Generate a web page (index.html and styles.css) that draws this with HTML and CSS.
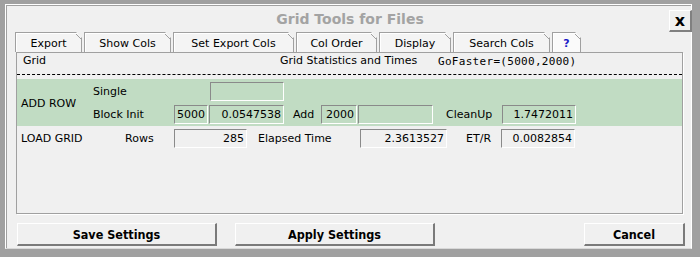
FILE: index.html
```html
<html>
   <head>
      <link rel="stylesheet" href="styles.css">
   </head>
   <body>
      <div class="frame">
         <div class="titleBar">
            <span></span>
            <span class="title">Grid Tools for Files</span>
            <button class="closeButton" type="button">x</button>
         </div>
         <div class="tabs">
            <div class="tab" style="width: 67px">Export</div>
            <div class="tab" style="width: 87px">Show Cols</div>
            <div class="tab" style="width: 121px">Set Export Cols</div>
            <div class="tab" style="width: 81px">Col Order</div>
            <div class="tab" style="width: 72px">Display</div>
            <div class="tab" style="width: 97px">Search Cols</div>
            <div class="tab tabHelp" style="width: 29px">?</div>
         </div>
         <div class="panel">
            <div class="panelHead">
               <span class="headGrid">Grid</span>
               <span class="headStats">Grid Statistics and Times</span>
               <span class="headMono">GoFaster=(5000,2000)</span>
            </div>
            <div class="addRow">
               <div class="section">ADD ROW</div>
               <div class="addLines">
                  <div class="line">
                     <span class="lbl" style="width: 117px">Single</span>
                     <input type="text" class="box" style="width: 74px" value="">
                  </div>
                  <div class="line">
                     <span class="lbl" style="width: 81px">Block Init</span>
                     <input type="text" class="box" style="width: 34px" value="5000">
                     <input type="text" class="box gap1" style="width: 75px" value="0.0547538">
                     <span class="lbl" style="width: 28px; margin-left: 9px">Add</span>
                     <input type="text" class="box" style="width: 36px" value="2000">
                     <input type="text" class="box gap1" style="width: 75px" value="">
                     <span class="lbl" style="width: 56px; margin-left: 13px">CleanUp</span>
                     <input type="text" class="box" style="width: 74px" value="1.7472011">
                  </div>
               </div>
            </div>
            <div class="line loadRow">
               <span class="lbl" style="width: 104px">LOAD GRID</span>
               <span class="lbl" style="width: 49px">Rows</span>
               <input type="text" class="box" style="width: 73px" value="285">
               <span class="lbl" style="width: 102px; margin-left: 11px">Elapsed Time</span>
               <input type="text" class="box" style="width: 87px" value="2.3613527">
               <span class="lbl" style="width: 35px; margin-left: 19px">ET/R</span>
               <input type="text" class="box" style="width: 74px" value="0.0082854">
            </div>
         </div>
         <div class="buttons">
            <button class="btn" type="button" style="width: 200px">Save Settings</button>
            <button class="btn" type="button" style="width: 200px; margin-left: 18px">Apply Settings</button>
            <button class="btn" type="button" style="width: 101px; margin-left: auto">Cancel</button>
         </div>
      </div>
   </body>
</html>
```

FILE: styles.css
```css
body {
margin: 0;
background-color: #a0a0a0;
font-family: "DejaVu Sans", sans-serif;
font-size: 11px;
color: #000;
}
.frame {
margin: 4px 8px 0 5px;
height: 243px;
border: 1px solid #fff;
border-bottom-color: #d8d8d8;
box-shadow: inset 1px 1px 0 #a0a0a0;
background-color: #f0f0f0;
display: flex;
flex-direction: column;
}
.titleBar {
display: grid;
grid-template-columns: 1fr auto 1fr;
align-items: end;
height: 27px;
}
.title {
font-size: 14px;
font-weight: bold;
color: #a3a3a3;
padding-bottom: 5px;
padding-left: 3px;
}
.closeButton {
justify-self: end;
width: 23px;
height: 22px;
margin-right: -1px;
padding: 0;
background-color: #f0f0f0;
border: 1px solid #fff;
border-right: 2px solid #808080;
border-bottom: 2px solid #808080;
font-family: "DejaVu Sans", sans-serif;
font-size: 16px;
font-weight: bold;
line-height: 16px;
color: #000;
}
.tabs {
display: flex;
gap: 2px;
padding-left: 9px;
height: 20px;
}
.tab {
box-sizing: border-box;
height: 20px;
border: 1px solid #a0a0a0;
border-bottom: none;
box-shadow: inset 1px 1px 0 #fff;
text-align: center;
padding-top: 4px;
clip-path: polygon(0 0, calc(100% - 6px) 0, 100% 6px, 100% 100%, 0 100%);
background-color: #f4f4f4;
background-image: linear-gradient(225deg, transparent 3.6px, #a0a0a0 3.6px, #a0a0a0 4.8px, transparent 4.8px);
background-size: 7px 7px;
background-position: top right;
background-repeat: no-repeat;
}
.tabHelp {
color: #1c1cc8;
font-weight: bold;
background-color: #fafafa;
}
.panel {
margin-left: 10px;
margin-right: 8px;
height: 160px;
border: 1px solid #a0a0a0;
box-shadow: 1px 1px 0 #fff;
}
.panelHead {
display: flex;
height: 22px;
align-items: flex-start;
padding-top: 1px;
box-sizing: border-box;
border-bottom: 1px dashed #000;
}
.headGrid {
width: 257px;
padding-left: 6px;
}
.headStats {
width: 158px;
}
.headMono {
font-family: "DejaVu Sans Mono", monospace;
font-size: 11px;
letter-spacing: 0.3px;
padding-top: 1px;
}
.addRow {
margin-top: 4px;
background-color: #c1dcc3;
display: flex;
padding-top: 3px;
padding-bottom: 2px;
}
.section {
width: 72px;
padding-left: 4px;
display: flex;
align-items: center;
}
.addLines {
display: flex;
flex-direction: column;
gap: 4px;
}
.line {
display: flex;
align-items: center;
height: 19px;
}
.loadRow {
margin-top: 3px;
padding-left: 4px;
}
.lbl {
display: inline-block;
white-space: nowrap;
}
.box {
box-sizing: border-box;
height: 19px;
padding: 0 2px 0 0;
border: 1px solid;
border-color: #8a8a8a #fff #fff #8a8a8a;
background-color: transparent;
text-align: right;
font-family: "DejaVu Sans", sans-serif;
font-size: 11px;
color: #000;
}
.gap1 {
margin-left: 1px;
}
.buttons {
display: flex;
padding-left: 11px;
padding-right: 6px;
margin-top: 9px;
}
.btn {
box-sizing: border-box;
height: 23px;
background-color: #f0f0f0;
border: 1px solid #fff;
border-right: 2px solid #7a7a7a;
border-bottom: 2px solid #7a7a7a;
font-family: "DejaVu Sans Condensed", "DejaVu Sans", sans-serif;
font-size: 12.5px;
font-weight: bold;
color: #000;
}
```
